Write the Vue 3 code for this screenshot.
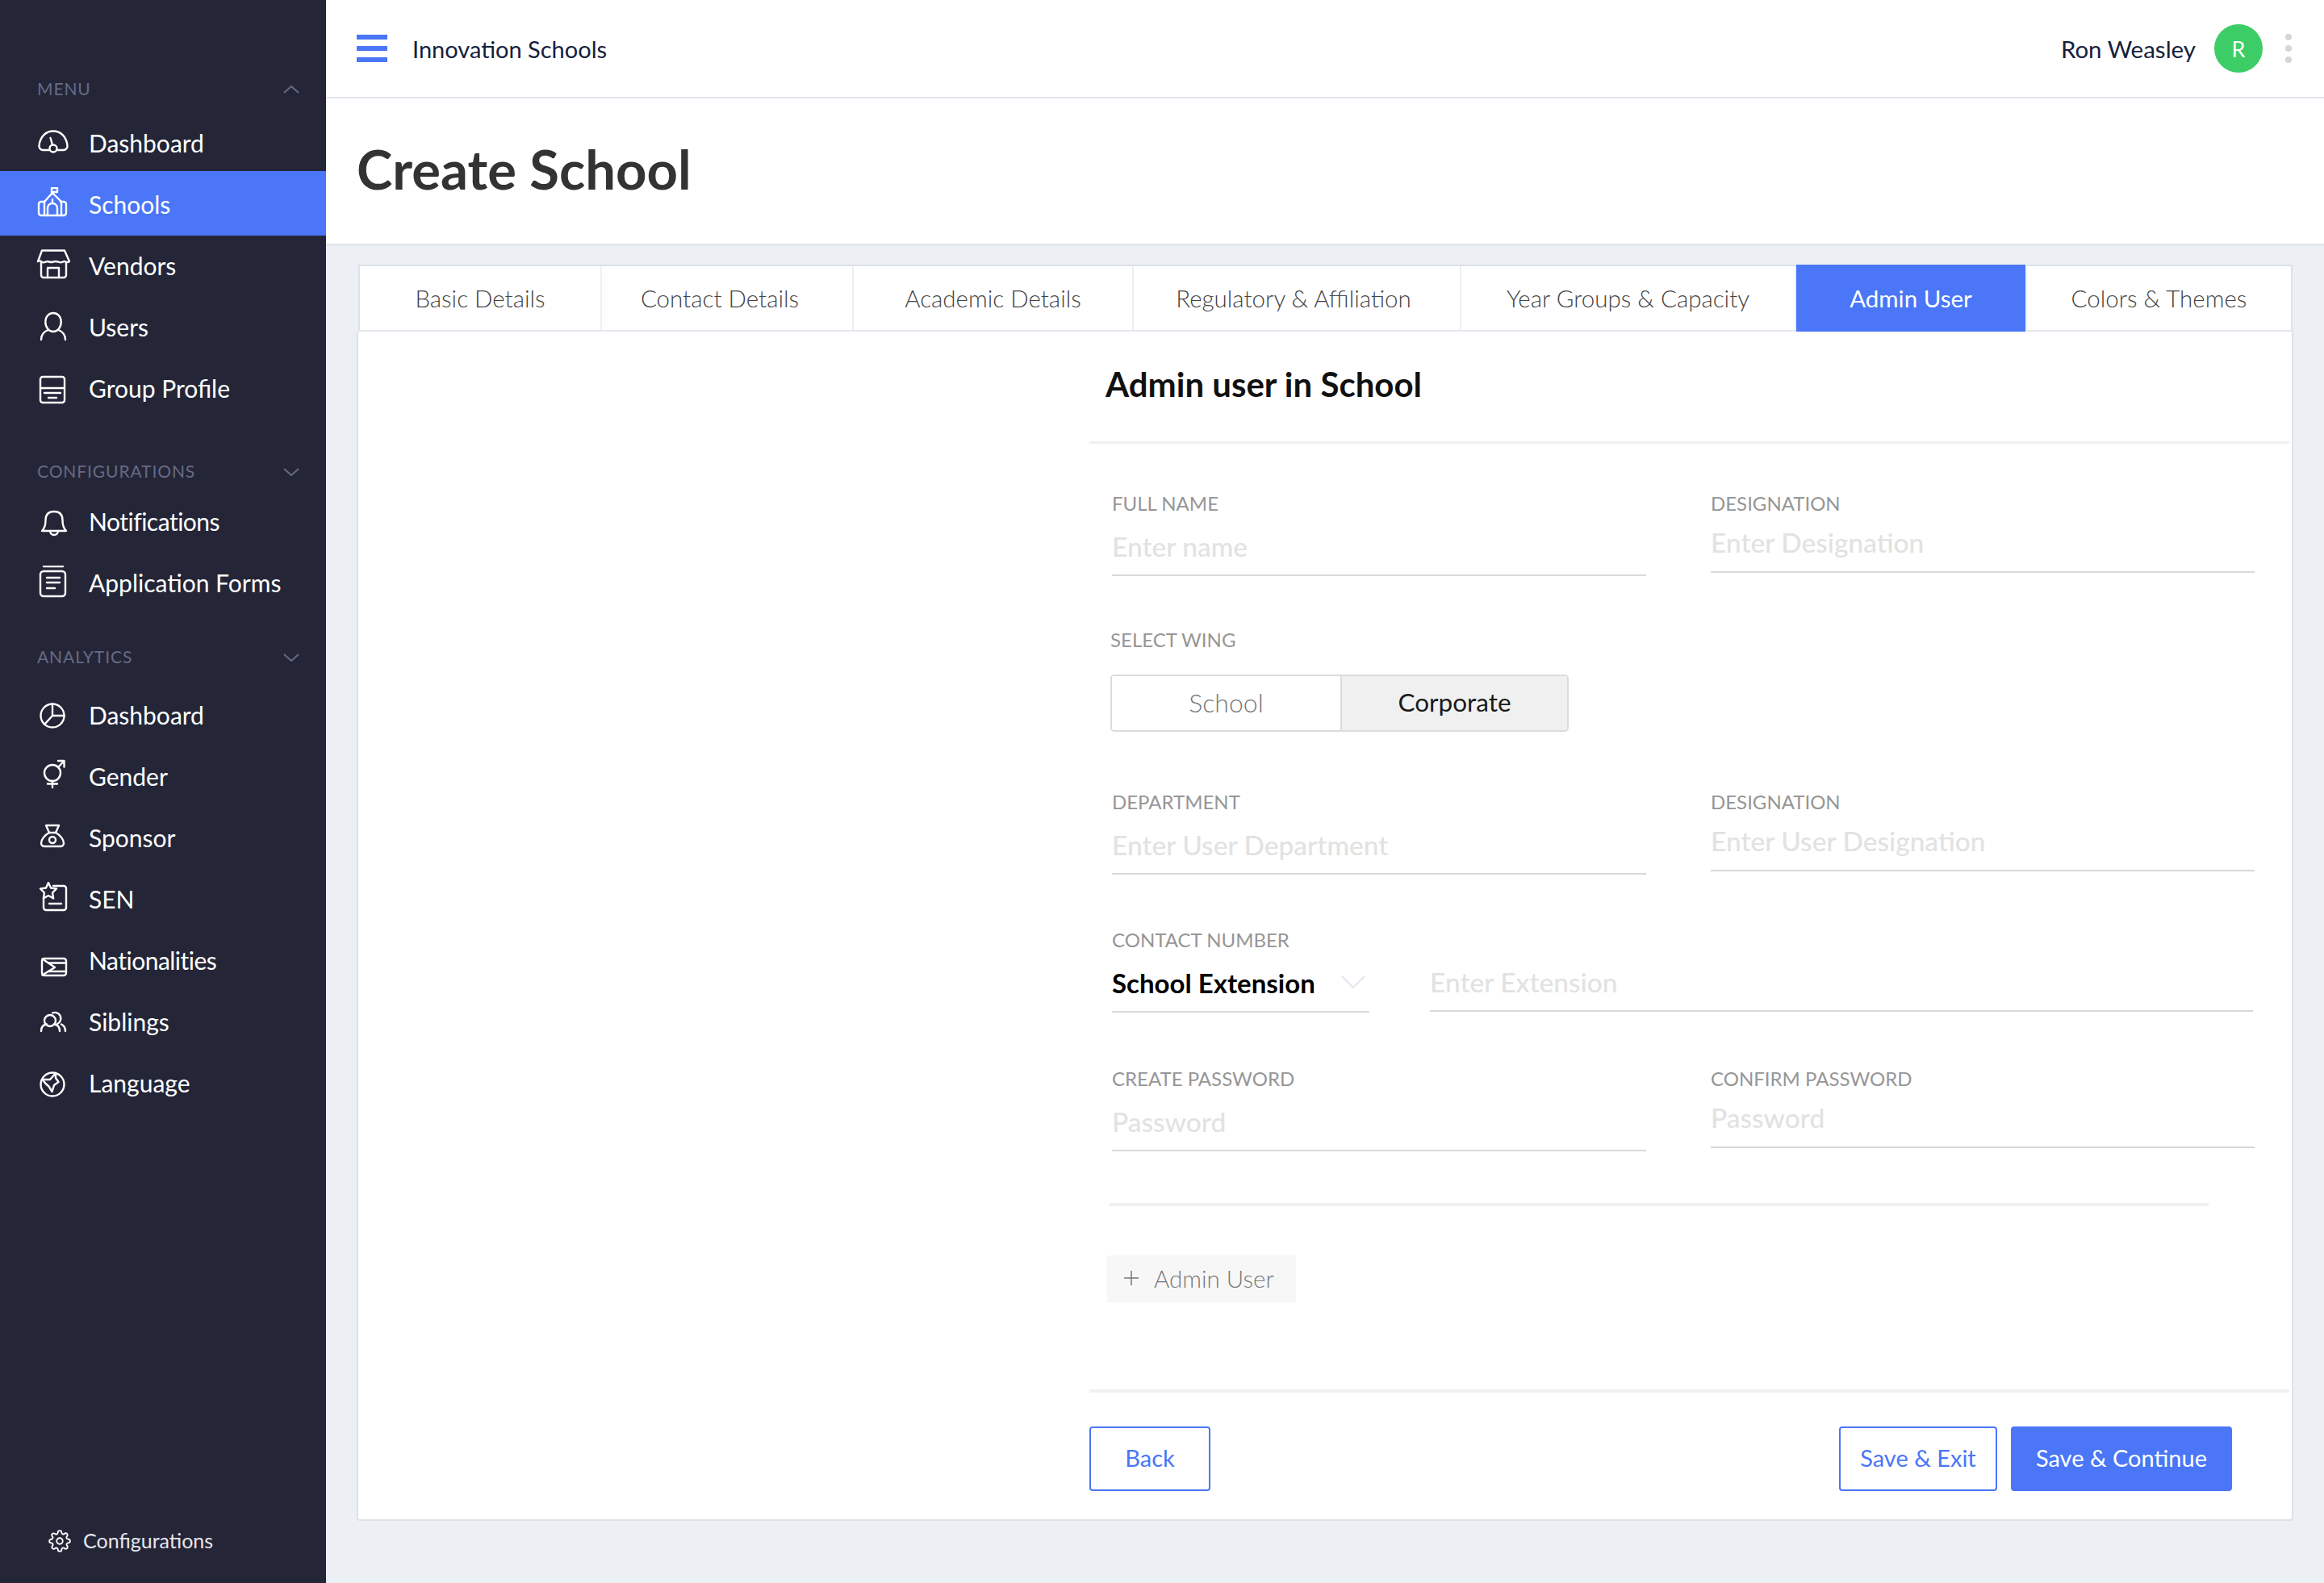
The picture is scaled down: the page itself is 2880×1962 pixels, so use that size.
<template>
  <div class="app">
    <aside class="sidebar">
      <section v-for="section in sections" :key="section.title" class="nav-section" :class="`nav-section--${section.id}`">
        <div class="nav-head">
          <span>{{ section.title }}</span>
          <svg class="nav-chevron" :class="{ 'nav-chevron--up': section.open }" viewBox="0 0 20 10">
            <path d="M1 1l9 8 9-8" />
          </svg>
        </div>
        <a
          v-for="item in section.items"
          :key="item.label"
          class="nav-item"
          :class="{ 'nav-item--active': item.active, 'nav-item--tight': item.tight }"
        >
          <svg class="nav-icon" viewBox="0 0 44 44">
            <path v-for="d in item.icon" :key="d" :d="d" />
          </svg>
          <span>{{ item.label }}</span>
        </a>
      </section>

      <a class="side-config">
        <svg class="side-config__icon" viewBox="0 0 24 24">
          <circle cx="12" cy="12" r="3.2" />
          <path d="M19.4 15a1.65 1.65 0 0 0 .33 1.82l.06.06a2 2 0 0 1 0 2.83 2 2 0 0 1-2.83 0l-.06-.06a1.65 1.65 0 0 0-1.82-.33 1.65 1.65 0 0 0-1 1.51V21a2 2 0 0 1-2 2 2 2 0 0 1-2-2v-.09A1.65 1.65 0 0 0 9 19.4a1.65 1.65 0 0 0-1.82.33l-.06.06a2 2 0 0 1-2.83 0 2 2 0 0 1 0-2.83l.06-.06a1.65 1.65 0 0 0 .33-1.82 1.65 1.65 0 0 0-1.51-1H3a2 2 0 0 1-2-2 2 2 0 0 1 2-2h.09A1.65 1.65 0 0 0 4.6 9a1.65 1.65 0 0 0-.33-1.82l-.06-.06a2 2 0 0 1 0-2.83 2 2 0 0 1 2.83 0l.06.06a1.65 1.65 0 0 0 1.82.33H9a1.65 1.65 0 0 0 1-1.51V3a2 2 0 0 1 2-2 2 2 0 0 1 2 2v.09a1.65 1.65 0 0 0 1 1.51 1.65 1.65 0 0 0 1.82-.33l.06-.06a2 2 0 0 1 2.83 0 2 2 0 0 1 0 2.83l-.06.06a1.65 1.65 0 0 0-.33 1.82V9a1.65 1.65 0 0 0 1.51 1H21a2 2 0 0 1 2 2 2 2 0 0 1-2 2h-.09a1.65 1.65 0 0 0-1.51 1z" />
        </svg>
        <span>Configurations</span>
      </a>
    </aside>

    <div class="main">
      <header class="topbar">
        <div class="hamburger"><i></i><i></i><i></i></div>
        <span class="topbar__org">Innovation Schools</span>
        <span class="topbar__user">Ron Weasley</span>
        <span class="avatar">R</span>
        <div class="kebab"><i></i><i></i><i></i></div>
      </header>

      <div class="page-title">
        <h1>Create School</h1>
      </div>

      <div class="content">
        <div class="card">
          <nav class="tabs">
            <a v-for="tab in tabs" :key="tab" class="tab" :class="{ 'tab--active': tab === 'Admin User' }">{{ tab }}</a>
          </nav>

          <div class="card__body">
            <div class="panel">
              <h2 class="panel__title">Admin user in School</h2>

              <form class="form" @submit.prevent>
                <div class="form-row">
                  <label class="field">
                    <span class="field__label">FULL NAME</span>
                    <input class="field__input" placeholder="Enter name" />
                  </label>
                  <label class="field">
                    <span class="field__label">DESIGNATION</span>
                    <input class="field__input field__input--short" placeholder="Enter Designation" />
                  </label>
                </div>

                <div class="wing">
                  <span class="field__label wing__label">SELECT WING</span>
                  <div class="wing__toggle">
                    <button type="button" class="wing__btn">School</button>
                    <button type="button" class="wing__btn wing__btn--on">Corporate</button>
                  </div>
                </div>

                <div class="form-row form-row--dept">
                  <label class="field">
                    <span class="field__label">DEPARTMENT</span>
                    <input class="field__input" placeholder="Enter User Department" />
                  </label>
                  <label class="field">
                    <span class="field__label">DESIGNATION</span>
                    <input class="field__input field__input--short" placeholder="Enter User Designation" />
                  </label>
                </div>

                <div class="contact">
                  <span class="field__label">CONTACT NUMBER</span>
                  <div class="contact__row">
                    <div class="contact__select">
                      <span>School Extension</span>
                      <svg viewBox="0 0 30 16"><path d="M1 1l14 14L29 1" /></svg>
                    </div>
                    <input class="field__input contact__ext" placeholder="Enter Extension" />
                  </div>
                </div>

                <div class="form-row form-row--password">
                  <label class="field">
                    <span class="field__label">CREATE PASSWORD</span>
                    <input class="field__input" placeholder="Password" />
                  </label>
                  <label class="field">
                    <span class="field__label">CONFIRM PASSWORD</span>
                    <input class="field__input field__input--short" placeholder="Password" />
                  </label>
                </div>

                <div class="form-divider"></div>

                <button type="button" class="add-user">
                  <svg viewBox="0 0 18 18"><path d="M9 0v18M0 9h18" /></svg>
                  <span>Admin User</span>
                </button>
              </form>

              <footer class="panel__footer">
                <button type="button" class="btn btn--back">Back</button>
                <button type="button" class="btn btn--exit">Save &amp; Exit</button>
                <button type="button" class="btn btn--primary">Save &amp; Continue</button>
              </footer>
            </div>
          </div>
        </div>
      </div>
    </div>
  </div>
</template>

<script setup>
const circle = (cx, cy, r) => `M${cx - r} ${cy}a${r} ${r} 0 1 0 ${r * 2} 0a${r} ${r} 0 1 0 ${-r * 2} 0`

const icons = {
  gauge: ['M17 30H9a5 5 0 0 1-4.5-6C6 13 13 6.500 22 6.500S38 13 39.500 24a5 5 0 0 1-4.500 6H27', circle(22, 28, 4.500), 'M21 23.500L18.500 15'],
  school: [
    'M20 9V1h7v5h-7',
    'M11 18l10-11 11 11',
    'M11 18H7a3 3 0 0 0-3 3v11a3 3 0 0 0 3 3h28a3 3 0 0 0 3-3V21a3 3 0 0 0-3-3h-4',
    'M11 18v17M32 18v17',
    'M15 35V26a6 6 0 0 1 12 0v9',
    'M21 15v3',
  ],
  store: [
    'M8 2.500h28l6 13.500c-3 2.500-5 0-6.500 0s-3.500 2-6 1-3.500-1-5-1-3.500 1-5 1-3.500-1-5-1-3.500 2-6 1S6 14 3 16z',
    'M7 18v15a3 3 0 0 0 3 3h25a3 3 0 0 0 3-3V18',
    'M15 36V24h14v12',
  ],
  user: ['M22 4c-5.500 0-9.700 4.500-9.700 11s4.200 12 9.700 12 9.700-5.500 9.700-12S27.500 4 22 4z', 'M7 37c0-5.500 3.500-10 8.500-12M37 37c0-5.500-3.500-10-8.500-12'],
  profile: ['M9 7h24a3 3 0 0 1 3 3v26a3 3 0 0 1-3 3H9a3 3 0 0 1-3-3V10a3 3 0 0 1 3-3z', 'M6 21h30M11 27h20M16 33h10'],
  bell: ['M8 33c4-4 4.500-8 4.500-13 0-7 3.500-11 10.500-11s10.500 4 10.500 11c0 5 .5 9 4.500 13z', 'M18 33a5 5 0 0 0 10 0'],
  forms: ['M10 1h24', 'M10 7h23a4 4 0 0 1 4 4v23a4 4 0 0 1-4 4H10a4 4 0 0 1-4-4V11a4 4 0 0 1 4-4z', 'M14 15h16M14 21h16M14 28h10'],
  pie: [circle(21, 22, 14.500), 'M21 7.500V22h14.500M21 22L11 33'],
  gender: [circle(21, 17, 10), 'M28 10l7.500-8M28 2h7.500v7.500', 'M21 27v8M15 30.500h12'],
  bag: ['M13 6h16l-4 9c6 3 10 9 10 13a4 4 0 0 1-4 4H11a4 4 0 0 1-4-4c0-4 4-10 10-13z', 'M17 15h8', circle(21, 24, 4)],
  sen: [
    'M22 5h13a3 3 0 0 1 3 3v24a3 3 0 0 1-3 3H13a3 3 0 0 1-3-3V20',
    'M16 1l3 6.500 7 1-5 5 1.200 7L16 17l-6.200 3.500 1.200-7-5-5 7-1z',
    'M17 27h15',
  ],
  flag: ['M11 19h24a3 3 0 0 1 3 3v15a3 3 0 0 1-3 3H11a3 3 0 0 1-3-3V22a3 3 0 0 1 3-3z', 'M8.500 19.500L24 30 8.500 39.500', 'M16 24.500h22M16 35h22'],
  people: [circle(18, 20, 7), 'M21 10.500a7 7 0 1 1 6 13.500', 'M7 33c0-5 3-8 7-8.500M23 24.500c4 .5 7 3.500 7 8.500M37 33c0-4.500-2-7-5-8.500'],
  globe: [circle(21, 23, 14.500), 'M8.500 17H18l7-8v6l3.500 5-5.500 4-2.500 8-4-6.500-4-3.500z'],
}

const sections = [
  {
    id: 'menu',
    title: 'MENU',
    open: true,
    items: [
      { label: 'Dashboard', icon: icons.gauge },
      { label: 'Schools', icon: icons.school, active: true },
      { label: 'Vendors', icon: icons.store },
      { label: 'Users', icon: icons.user },
      { label: 'Group Profile', icon: icons.profile },
    ],
  },
  {
    id: 'config',
    title: 'CONFIGURATIONS',
    items: [
      { label: 'Notifications', icon: icons.bell, tight: true },
      { label: 'Application Forms', icon: icons.forms },
    ],
  },
  {
    id: 'analytics',
    title: 'ANALYTICS',
    items: [
      { label: 'Dashboard', icon: icons.pie },
      { label: 'Gender', icon: icons.gender },
      { label: 'Sponsor', icon: icons.bag },
      { label: 'SEN', icon: icons.sen },
      { label: 'Nationalities', icon: icons.flag, tight: true },
      { label: 'Siblings', icon: icons.people },
      { label: 'Language', icon: icons.globe },
    ],
  },
]

const tabs = [
  'Basic Details',
  'Contact Details',
  'Academic Details',
  'Regulatory & Affiliation',
  'Year Groups & Capacity',
  'Admin User',
  'Colors & Themes',
]
</script>

<style>
html,
body {
  margin: 0;
  background: #eceff4;
}
</style>

<style scoped>
.app {
  display: flex;
  width: 2880px;
  min-height: 1962px;
  font-family: Lato, 'Noto Sans', sans-serif;
  background: #eceff4;
}

.sidebar {
  flex: 0 0 404px;
  display: flex;
  flex-direction: column;
  padding-top: 89px;
  box-sizing: border-box;
  background: #242638;
  color: #fff;
}

.nav-section--config {
  margin-top: 43px;
}

.nav-section--analytics {
  margin-top: 32px;
}

.nav-head {
  display: flex;
  align-items: center;
  justify-content: space-between;
  height: 44px;
  padding: 0 33px 0 46px;
  margin-bottom: 7px;
  color: #666a85;
  font-size: 21px;
  letter-spacing: 0.9px;
}

.nav-head span {
  margin-top: -3px;
}

.nav-section--config .nav-head {
  margin-bottom: 2px;
}

.nav-section--analytics .nav-head {
  margin-bottom: 12px;
}

.nav-chevron {
  width: 20px;
  height: 10px;
  fill: none;
  stroke: #666a85;
  stroke-width: 2;
}

.nav-chevron--up {
  transform: rotate(180deg);
}

.nav-item {
  display: flex;
  align-items: center;
  height: 76px;
  padding-left: 44px;
  font-size: 30px;
}

.nav-item span {
  margin-top: -3px;
}

.nav-item--tight span {
  letter-spacing: -0.5px;
}

.nav-item--active {
  background: #4a76f7;
  box-shadow: 0 -4px 0 #4a76f7;
}

.nav-icon {
  flex: 0 0 44px;
  width: 44px;
  height: 44px;
  margin-right: 22px;
  fill: none;
  stroke: #fff;
  stroke-width: 2.4;
  stroke-linejoin: round;
  stroke-linecap: round;
}

.side-config {
  display: flex;
  align-items: center;
  height: 44px;
  margin-top: auto;
  margin-bottom: 30px;
  padding-left: 60px;
  font-size: 25px;
  color: #e6e7ec;
}

.side-config span {
  margin-top: -2px;
}

.side-config__icon {
  width: 28px;
  height: 28px;
  margin-right: 15px;
  fill: none;
  stroke: #fff;
  stroke-width: 1.6;
}

.main {
  flex: 1;
  display: flex;
  flex-direction: column;
  min-width: 0;
}

.topbar {
  display: flex;
  align-items: center;
  height: 120px;
  padding: 0 40px 0 38px;
  border-bottom: 2px solid #e0e4ea;
  background: #fff;
}

.hamburger {
  display: grid;
  gap: 8px;
  width: 38px;
  margin-right: 31px;
}

.hamburger i {
  height: 6px;
  background: #4a76f7;
}

.topbar__org {
  font-size: 29px;
  color: #14213d;
}

.topbar__user {
  margin-left: auto;
  margin-right: 23px;
  font-size: 29.5px;
  color: #14213d;
}

.avatar {
  display: flex;
  align-items: center;
  justify-content: center;
  width: 60px;
  height: 60px;
  margin-right: 28px;
  border-radius: 50%;
  background: #3dcd66;
  color: #fff;
  font-size: 27px;
}

.kebab {
  display: grid;
  gap: 6px;
  width: 8px;
}

.kebab i {
  width: 8px;
  height: 8px;
  border-radius: 50%;
  background: #d6d6d6;
}

.page-title {
  display: flex;
  align-items: center;
  height: 180px;
  padding-left: 38px;
  border-bottom: 2px solid #e0e4ea;
  background: #fff;
}

.page-title h1 {
  margin: -7px 0 0;
  font-size: 67px;
  font-weight: 700;
  color: #333;
}

.content {
  padding: 24px 38px 77px;
}

.tabs {
  display: grid;
  grid-template-columns: 300px 312px 347px 406px 415px 286px 327px;
  height: 83px;
  margin: 0 1px 0 2px;
  box-sizing: border-box;
  border: 2px solid #dde1ea;
  border-bottom: 2px solid #e4e7ee;
  background: #fff;
}

.tab {
  display: flex;
  align-items: center;
  justify-content: center;
  border-right: 2px solid #eceff4;
  font-size: 29.5px;
  font-weight: 300;
  color: #444;
}

.tab:nth-child(2) {
  padding-right: 18px;
}

.tab:nth-child(4) {
  padding-right: 8px;
}

.tab:last-child {
  border-right: 0;
}

.tab--active {
  margin: -2px 0;
  background: #4a76f7;
  color: #fff;
  font-weight: 400;
}

.card__body {
  border: 2px solid #dde1ea;
  border-top: 0;
  border-radius: 0 0 4px 4px;
  background: #fff;
}

.panel {
  margin-left: 906px;
  margin-right: 3px;
}

.panel__title {
  height: 136px;
  margin: 0;
  padding-left: 20px;
  border-bottom: 3px solid #f0f0f0;
  box-sizing: content-box;
  font-size: 42px;
  line-height: 130px;
  font-weight: 700;
  color: #111;
}

.form {
  padding: 59px 0 108px 28px;
}

.form-row {
  display: grid;
  grid-template-columns: 662px 674px;
  gap: 80px;
  align-items: start;
}

.form-row--dept {
  margin-top: 72px;
}

.form-row--password {
  margin-top: 67px;
}

.field {
  display: block;
}

.field__label {
  display: block;
  height: 30px;
  font-size: 24px;
  line-height: 30px;
  color: #969696;
}

.field__input {
  display: block;
  width: 100%;
  height: 75px;
  box-sizing: border-box;
  padding: 2px 0 0;
  border: 0;
  border-bottom: 2px solid #d9d9d9;
  outline: 0;
  background: transparent;
  font: 500 33.5px Lato, 'Noto Sans', sans-serif;
  color: #333;
}

.field__input::placeholder {
  color: #e2e2e2;
  opacity: 1;
}

.field__input--short {
  height: 71px;
  padding: 0 0 3px;
}

.wing {
  margin-top: 64px;
  margin-left: -2px;
}

.wing__toggle {
  display: grid;
  grid-template-columns: 283px 1fr;
  width: 568px;
  height: 71px;
  margin-top: 28px;
  box-sizing: border-box;
  border: 2px solid #dcdcdc;
  border-radius: 5px;
  overflow: hidden;
}

.wing__btn {
  border: 0;
  padding: 0 0 3px;
  background: #fff;
  font: 300 32px Lato, 'Noto Sans', sans-serif;
  color: #777;
}

.wing__btn--on {
  border-left: 2px solid #dcdcdc;
  background: #f0f0f0;
  font-weight: 400;
  font-size: 31.5px;
  color: #1a1a1a;
}

.contact {
  margin-top: 66px;
}

.contact__row {
  display: flex;
  align-items: flex-start;
  gap: 75px;
}

.contact__select {
  display: flex;
  align-items: center;
  justify-content: space-between;
  flex: 0 0 319px;
  height: 75px;
  box-sizing: border-box;
  padding: 2px 5px 0 0;
  border-bottom: 2px solid #d9d9d9;
  font-size: 33px;
  font-weight: 700;
  color: #000;
}

.contact__select svg {
  width: 30px;
  height: 16px;
  margin-top: -2px;
  fill: none;
  stroke: #e1e5ee;
  stroke-width: 2;
}

.contact__ext {
  flex: 0 0 1020px;
  width: 1020px;
  height: 74px;
}

.form-divider {
  width: 1362px;
  height: 4px;
  margin: 64px 0 0 -3px;
  background: #f0f0f0;
}

.add-user {
  display: flex;
  align-items: center;
  width: 234px;
  height: 58px;
  margin: 61px 0 0 -6px;
  padding: 0 0 2px 21px;
  border: 0;
  background: #f7f7f7;
  font: 300 29.5px Lato, 'Noto Sans', sans-serif;
  color: #777;
}

.add-user svg {
  width: 18px;
  height: 18px;
  margin-right: 19px;
  fill: none;
  stroke: #777;
  stroke-width: 1.5;
}

.panel__footer {
  display: flex;
  align-items: center;
  gap: 17px;
  padding: 42px 71px 35px 0;
  border-top: 4px solid #f0f0f0;
}

.btn {
  height: 80px;
  box-sizing: border-box;
  padding: 0 0 3px;
  border: 2px solid #4a76f7;
  border-radius: 4px;
  background: #fff;
  font: 400 29px Lato, 'Noto Sans', sans-serif;
  color: #4a76f7;
}

.btn--back {
  width: 150px;
  margin-right: auto;
}

.btn--exit {
  width: 196px;
}

.btn--primary {
  width: 274px;
  background: #4a76f7;
  color: #fff;
}
</style>
